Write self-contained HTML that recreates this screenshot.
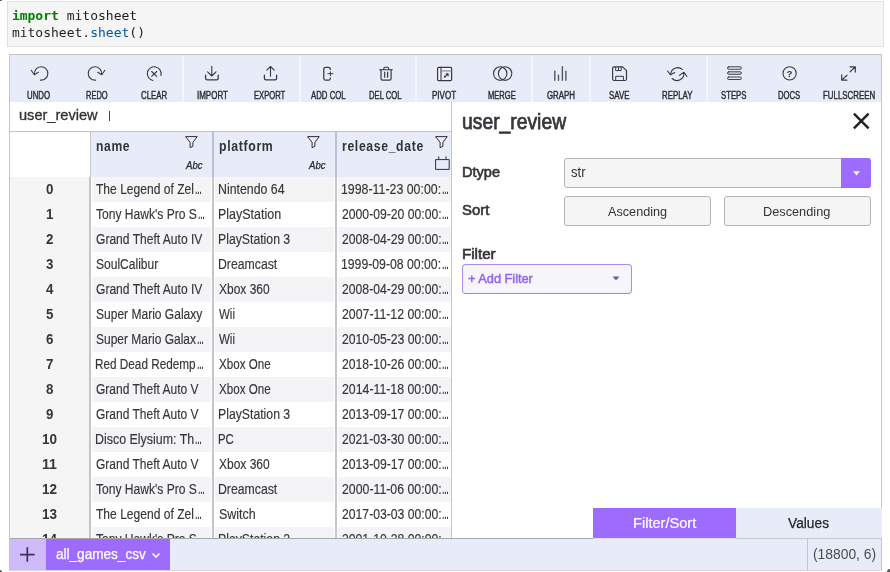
<!DOCTYPE html>
<html lang="en"><head><meta charset="utf-8"><title>mitosheet</title>
<style>
html,body{margin:0;padding:0;background:#fff;}
body{width:890px;height:572px;position:relative;overflow:hidden;}
div,span.t,svg{position:absolute;box-sizing:border-box;}
span.t{white-space:pre;transform-origin:0 50%;display:block;}
svg{overflow:visible;}
.wrap{left:0;top:0;width:890px;height:572px;overflow:hidden;will-change:transform;}
</style></head>
<body>
<div class="wrap">
<div style="left:7px;top:1px;width:877px;height:46px;background:#f5f5f5;border:1px solid #e0e0e0;"></div>
<span class="t" style="top:7px;font:700 13px/17px 'DejaVu Sans Mono', 'Liberation Mono', monospace;color:#008000;left:11.90px;">import</span><span class="t" style="top:7px;font:400 13px/17px 'DejaVu Sans Mono', 'Liberation Mono', monospace;color:#1f1f1f;left:58.88px;"> mitosheet</span>
<span class="t" style="top:24px;font:400 13px/17px 'DejaVu Sans Mono', 'Liberation Mono', monospace;color:#1f1f1f;left:11.90px;">mitosheet.</span><span class="t" style="top:24px;font:400 13px/17px 'DejaVu Sans Mono', 'Liberation Mono', monospace;color:#0055aa;left:90.20px;">sheet</span><span class="t" style="top:24px;font:400 13px/17px 'DejaVu Sans Mono', 'Liberation Mono', monospace;color:#1f1f1f;left:129.35px;">()</span>
<div style="left:9px;top:54px;width:873px;height:516px;background:#fff;border:1px solid #c6c6c6;"></div>
<div style="left:10px;top:55px;width:871px;height:47px;background:#e8ebf8;"></div>
<div style="left:182px;top:56px;width:2px;height:46px;background:#f5f6fc;"></div>
<div style="left:299px;top:56px;width:2px;height:46px;background:#f5f6fc;"></div>
<div style="left:415px;top:56px;width:2px;height:46px;background:#f5f6fc;"></div>
<div style="left:531px;top:56px;width:2px;height:46px;background:#f5f6fc;"></div>
<div style="left:589px;top:56px;width:2px;height:46px;background:#f5f6fc;"></div>
<div style="left:706px;top:56px;width:2px;height:46px;background:#f5f6fc;"></div>
<span class="t" style="top:89px;font:400 10px/14px 'Liberation Sans', sans-serif;color:#2b2b31;-webkit-text-stroke:0.4px #2b2b31;left:26.90px;transform:scale(0.7821,1);transform-origin:0 10px;">UNDO</span>
<span class="t" style="top:89px;font:400 10px/14px 'Liberation Sans', sans-serif;color:#2b2b31;-webkit-text-stroke:0.4px #2b2b31;left:85.50px;transform:scale(0.7488,1);transform-origin:0 10px;">REDO</span>
<span class="t" style="top:89px;font:400 10px/14px 'Liberation Sans', sans-serif;color:#2b2b31;-webkit-text-stroke:0.4px #2b2b31;left:141.00px;transform:scale(0.7850,1);transform-origin:0 10px;">CLEAR</span>
<span class="t" style="top:89px;font:400 10px/14px 'Liberation Sans', sans-serif;color:#2b2b31;-webkit-text-stroke:0.4px #2b2b31;left:196.60px;transform:scale(0.7980,1);transform-origin:0 10px;">IMPORT</span>
<span class="t" style="top:89px;font:400 10px/14px 'Liberation Sans', sans-serif;color:#2b2b31;-webkit-text-stroke:0.4px #2b2b31;left:254.20px;transform:scale(0.7642,1);transform-origin:0 10px;">EXPORT</span>
<span class="t" style="top:89px;font:400 10px/14px 'Liberation Sans', sans-serif;color:#2b2b31;-webkit-text-stroke:0.4px #2b2b31;left:311.00px;transform:scale(0.7797,1);transform-origin:0 10px;">ADD COL</span>
<span class="t" style="top:89px;font:400 10px/14px 'Liberation Sans', sans-serif;color:#2b2b31;-webkit-text-stroke:0.4px #2b2b31;left:369.30px;transform:scale(0.7680,1);transform-origin:0 10px;">DEL COL</span>
<span class="t" style="top:89px;font:400 10px/14px 'Liberation Sans', sans-serif;color:#2b2b31;-webkit-text-stroke:0.4px #2b2b31;left:432.40px;transform:scale(0.8028,1);transform-origin:0 10px;">PIVOT</span>
<span class="t" style="top:89px;font:400 10px/14px 'Liberation Sans', sans-serif;color:#2b2b31;-webkit-text-stroke:0.4px #2b2b31;left:488.00px;transform:scale(0.7568,1);transform-origin:0 10px;">MERGE</span>
<span class="t" style="top:89px;font:400 10px/14px 'Liberation Sans', sans-serif;color:#2b2b31;-webkit-text-stroke:0.4px #2b2b31;left:546.70px;transform:scale(0.7866,1);transform-origin:0 10px;">GRAPH</span>
<span class="t" style="top:89px;font:400 10px/14px 'Liberation Sans', sans-serif;color:#2b2b31;-webkit-text-stroke:0.4px #2b2b31;left:608.85px;transform:scale(0.7880,1);transform-origin:0 10px;">SAVE</span>
<span class="t" style="top:89px;font:400 10px/14px 'Liberation Sans', sans-serif;color:#2b2b31;-webkit-text-stroke:0.4px #2b2b31;left:661.65px;transform:scale(0.7862,1);transform-origin:0 10px;">REPLAY</span>
<span class="t" style="top:89px;font:400 10px/14px 'Liberation Sans', sans-serif;color:#2b2b31;-webkit-text-stroke:0.4px #2b2b31;left:721.35px;transform:scale(0.7760,1);transform-origin:0 10px;">STEPS</span>
<span class="t" style="top:89px;font:400 10px/14px 'Liberation Sans', sans-serif;color:#2b2b31;-webkit-text-stroke:0.4px #2b2b31;left:778.00px;transform:scale(0.7666,1);transform-origin:0 10px;">DOCS</span>
<span class="t" style="top:89px;font:400 10px/14px 'Liberation Sans', sans-serif;color:#2b2b31;-webkit-text-stroke:0.4px #2b2b31;left:822.75px;transform:scale(0.7875,1);transform-origin:0 10px;">FULLSCREEN</span>
<svg style="left:0;top:0" width="890" height="110" viewBox="0 0 890 110" fill="none" stroke="#3a3a42" stroke-linecap="round" stroke-linejoin="round"><path d="M34.5 74.3A6.7 6.7 0 1 1 40.4 80.1" stroke-width="1.1" /><path d="M31.2 70.3L34.3 74.8L38.4 72.3" stroke-width="1.1" /><path d="M101.6 74.3A6.7 6.7 0 1 0 95.7 80.1" stroke-width="1.1" /><path d="M104.9 70.3L101.8 74.8L97.7 72.3" stroke-width="1.1" /><path d="M160.9 75.4A6.9 6.9 0 1 0 153.0 80.45" stroke-width="1.1" /><path d="M151.7 71.5L156.7 76.3M156.7 71.5L151.7 76.3" stroke-width="1.1" /><path d="M211.8 66.3V75.8M207.6 71.8L211.8 76L216 71.8" stroke-width="1.1" /><path d="M205.6 75.2V78.2Q205.6 79.8 207.2 79.8H216.6Q218.2 79.8 218.2 78.2V75.2" stroke-width="1.3" /><path d="M270.5 76.2V66.6M266.8 70.2L270.5 66.5L274.2 70.2" stroke-width="1.1" /><path d="M264.4 75.2V78.2Q264.4 79.8 266 79.8H275Q276.6 79.8 276.6 78.2V75.2" stroke-width="1.3" /><path d="M330.3 70.0V69.1Q330.3 67.3 328.5 67.3H325.6Q323.8 67.3 323.8 69.1V78.4Q323.8 80.2 325.6 80.2H328.5Q330.3 80.2 330.3 78.4V77.5" stroke-width="1.25" stroke-linecap="butt"/><path d="M327.5 73.7H333.3M330.4 71.4V76.1" stroke-width="1.0" stroke-linecap="butt"/><path d="M379.6 69.7H392.4M383.8 69.5V68.3Q383.8 67.3 384.8 67.3H387.6Q388.6 67.3 388.6 68.3V69.5" stroke-width="1.1" /><path d="M381 69.9V78.6Q381 80.2 382.6 80.2H389.5Q391.1 80.2 391.1 78.6V69.9" stroke-width="1.2" /><path d="M384.7 72.2V77.2M387.6 72.2V77.2" stroke-width="1.2" /><rect x="437.6" y="67.4" width="14" height="13.1" rx="1" fill="#f7f7fd" stroke-width="1.25"/><rect x="441.4" y="71.3" width="9.6" height="8.6" fill="#e8ebf8" stroke="none"/><path d="M441 67.4V80.5" stroke-width="1.1" /><path d="M441 70.9H451.6" stroke-width="1.0" stroke="#77777f"/><path d="M444.6 76.9L447.8 74.3M446.3 73.9H448.1V75.8" stroke-width="1.1" /><circle cx="444.8" cy="76.7" r="0.9" fill="#2f2f36" stroke="none"/><ellipse cx="500.2" cy="73.55" rx="6.7" ry="6.8" stroke-width="1.1"/><ellipse cx="505.1" cy="73.55" rx="6.7" ry="6.8" stroke-width="1.1"/><path d="M554.8 71.1V80.3M558.5 75.2V80.3M562.4 66.6V80.3M565.9 71.1V80.3" stroke-width="1.4" stroke="#565660"/><path d="M614.1 66.9H622.6L626.5 70.6V79Q626.5 80.5 625 80.5H614.1Q612.6 80.5 612.6 79V68.4Q612.6 66.9 614.1 66.9Z" stroke-width="1.2" /><path d="M615.7 67V70.6H621.2V67M618.5 67.4V69.6" stroke-width="1.0" /><path d="M615.7 80.4V76.3H623.4V80.4" stroke-width="1.0" /><path d="M670.7 74.4A7.1 7.1 0 0 1 682.3 69.3" stroke-width="1.1" /><path d="M667.6 71.0L670.5 74.8L674.7 72.4" stroke-width="1.1" /><path d="M683.9 72.8A6.9 6.9 0 0 1 672.2 78.5" stroke-width="1.1" /><path d="M679.4 75.4L683.9 72.3L686.9 76.5" stroke-width="1.1" /><rect x="727.5" y="66.8" width="13.9" height="2.5" rx="1.25" fill="#e6e8f7" stroke-width="0.95"/><rect x="727.5" y="71.8" width="13.9" height="2.5" rx="1.25" fill="#d9d9df" stroke-width="0.95"/><rect x="727.5" y="77.0" width="13.9" height="2.5" rx="1.25" fill="#e6e8f7" stroke-width="0.95"/><circle cx="789.6" cy="73.4" r="6.6" stroke-width="1.1"/><text x="789.6" y="76.7" text-anchor="middle" font-family="'Liberation Sans',sans-serif" font-weight="700" font-size="9.2" fill="#2f2f36" stroke="none">?</text><path d="M850 71.9L855.3 66.8M850 66.8H855.3V72.1" stroke-width="1.2" /><path d="M847 75.2L841.7 80.1M841.7 74.9V80.1H847" stroke-width="1.2" /></svg>
<span class="t" style="top:105px;font:400 15px/19px 'Liberation Sans', sans-serif;color:#2f2f33;-webkit-text-stroke:0.3px #2f2f33;left:19.20px;transform:scale(0.9712,1);transform-origin:0 15px;">user_review</span>
<div style="left:109px;top:111px;width:1px;height:10px;background:#4a4a4e;"></div>
<div style="left:10px;top:131px;width:441px;height:1px;background:#c4c4c4;"></div>
<div style="left:91px;top:132px;width:360px;height:45px;background:#e8ebf8;"></div>
<div style="left:10px;top:177px;width:79px;height:361px;background:#f5f5f5;"></div>
<div style="left:90px;top:132px;width:1px;height:45px;background:#c6c6cc;"></div>
<div style="left:89px;top:177px;width:2px;height:361px;background:#c4c4c4;"></div>
<div style="left:212px;top:132px;width:2px;height:45px;background:#bcc0d2;"></div>
<div style="left:212px;top:177px;width:2px;height:361px;background:#c6c6c8;"></div>
<div style="left:335px;top:132px;width:2px;height:45px;background:#bcc0d2;"></div>
<div style="left:335px;top:177px;width:2px;height:361px;background:#c6c6c8;"></div>
<div style="left:92px;top:177px;width:119px;height:25px;background:#f4f4f6;"></div>
<div style="left:215px;top:177px;width:119px;height:25px;background:#f4f4f6;"></div>
<div style="left:338px;top:177px;width:113px;height:25px;background:#f4f4f6;"></div>
<span class="t" style="top:180px;font:700 14px/18px 'Liberation Sans', sans-serif;color:#35353a;left:45.60px;transform:scale(0.9500,1);transform-origin:0 14px;">0</span>
<span class="t" style="top:180px;font:400 14px/18px 'Liberation Sans', sans-serif;color:#35353a;-webkit-text-stroke:0.15px #35353a;left:96.00px;transform:scale(0.8615,1);transform-origin:0 14px;">The Legend of Zel</span><span class="t" style="top:180px;font:700 14px/18px 'Liberation Sans', sans-serif;color:#35353a;left:195.02px;transform:scale(0.4833,1);transform-origin:0 14px;">…</span>
<span class="t" style="top:180px;font:400 14px/18px 'Liberation Sans', sans-serif;color:#35353a;-webkit-text-stroke:0.15px #35353a;left:218.12px;transform:scale(0.8807,1);transform-origin:0 14px;">Nintendo 64</span>
<span class="t" style="top:180px;font:400 14px/18px 'Liberation Sans', sans-serif;color:#35353a;-webkit-text-stroke:0.15px #35353a;left:341.42px;transform:scale(0.8825,1);transform-origin:0 14px;">1998-11-23 00:00:</span><span class="t" style="top:180px;font:700 14px/18px 'Liberation Sans', sans-serif;color:#35353a;left:441.92px;transform:scale(0.4833,1);transform-origin:0 14px;">…</span>
<span class="t" style="top:205px;font:700 14px/18px 'Liberation Sans', sans-serif;color:#35353a;left:45.60px;transform:scale(0.9500,1);transform-origin:0 14px;">1</span>
<span class="t" style="top:205px;font:400 14px/18px 'Liberation Sans', sans-serif;color:#35353a;-webkit-text-stroke:0.15px #35353a;left:96.00px;transform:scale(0.8620,1);transform-origin:0 14px;">Tony Hawk's Pro S</span><span class="t" style="top:205px;font:700 14px/18px 'Liberation Sans', sans-serif;color:#35353a;left:197.82px;transform:scale(0.4833,1);transform-origin:0 14px;">…</span>
<span class="t" style="top:205px;font:400 14px/18px 'Liberation Sans', sans-serif;color:#35353a;-webkit-text-stroke:0.15px #35353a;left:218.11px;transform:scale(0.8909,1);transform-origin:0 14px;">PlayStation</span>
<span class="t" style="top:205px;font:400 14px/18px 'Liberation Sans', sans-serif;color:#35353a;-webkit-text-stroke:0.15px #35353a;left:341.80px;transform:scale(0.8711,1);transform-origin:0 14px;">2000-09-20 00:00:</span><span class="t" style="top:205px;font:700 14px/18px 'Liberation Sans', sans-serif;color:#35353a;left:441.92px;transform:scale(0.4833,1);transform-origin:0 14px;">…</span>
<div style="left:92px;top:227px;width:119px;height:25px;background:#f4f4f6;"></div>
<div style="left:215px;top:227px;width:119px;height:25px;background:#f4f4f6;"></div>
<div style="left:338px;top:227px;width:113px;height:25px;background:#f4f4f6;"></div>
<span class="t" style="top:230px;font:700 14px/18px 'Liberation Sans', sans-serif;color:#35353a;left:45.60px;transform:scale(0.9500,1);transform-origin:0 14px;">2</span>
<span class="t" style="top:230px;font:400 14px/18px 'Liberation Sans', sans-serif;color:#35353a;-webkit-text-stroke:0.15px #35353a;left:96.00px;transform:scale(0.8612,1);transform-origin:0 14px;">Grand Theft Auto IV</span>
<span class="t" style="top:230px;font:400 14px/18px 'Liberation Sans', sans-serif;color:#35353a;-webkit-text-stroke:0.15px #35353a;left:218.12px;transform:scale(0.8750,1);transform-origin:0 14px;">PlayStation 3</span>
<span class="t" style="top:230px;font:400 14px/18px 'Liberation Sans', sans-serif;color:#35353a;-webkit-text-stroke:0.15px #35353a;left:341.80px;transform:scale(0.8711,1);transform-origin:0 14px;">2008-04-29 00:00:</span><span class="t" style="top:230px;font:700 14px/18px 'Liberation Sans', sans-serif;color:#35353a;left:441.92px;transform:scale(0.4833,1);transform-origin:0 14px;">…</span>
<span class="t" style="top:255px;font:700 14px/18px 'Liberation Sans', sans-serif;color:#35353a;left:45.60px;transform:scale(0.9500,1);transform-origin:0 14px;">3</span>
<span class="t" style="top:255px;font:400 14px/18px 'Liberation Sans', sans-serif;color:#35353a;-webkit-text-stroke:0.15px #35353a;left:96.00px;transform:scale(0.8596,1);transform-origin:0 14px;">SoulCalibur</span>
<span class="t" style="top:255px;font:400 14px/18px 'Liberation Sans', sans-serif;color:#35353a;-webkit-text-stroke:0.15px #35353a;left:218.12px;transform:scale(0.8758,1);transform-origin:0 14px;">Dreamcast</span>
<span class="t" style="top:255px;font:400 14px/18px 'Liberation Sans', sans-serif;color:#35353a;-webkit-text-stroke:0.15px #35353a;left:341.43px;transform:scale(0.8744,1);transform-origin:0 14px;">1999-09-08 00:00:</span><span class="t" style="top:255px;font:700 14px/18px 'Liberation Sans', sans-serif;color:#35353a;left:441.92px;transform:scale(0.4833,1);transform-origin:0 14px;">…</span>
<div style="left:92px;top:277px;width:119px;height:25px;background:#f4f4f6;"></div>
<div style="left:215px;top:277px;width:119px;height:25px;background:#f4f4f6;"></div>
<div style="left:338px;top:277px;width:113px;height:25px;background:#f4f4f6;"></div>
<span class="t" style="top:280px;font:700 14px/18px 'Liberation Sans', sans-serif;color:#35353a;left:45.60px;transform:scale(0.9500,1);transform-origin:0 14px;">4</span>
<span class="t" style="top:280px;font:400 14px/18px 'Liberation Sans', sans-serif;color:#35353a;-webkit-text-stroke:0.15px #35353a;left:96.00px;transform:scale(0.8612,1);transform-origin:0 14px;">Grand Theft Auto IV</span>
<span class="t" style="top:280px;font:400 14px/18px 'Liberation Sans', sans-serif;color:#35353a;-webkit-text-stroke:0.15px #35353a;left:219.00px;transform:scale(0.8556,1);transform-origin:0 14px;">Xbox 360</span>
<span class="t" style="top:280px;font:400 14px/18px 'Liberation Sans', sans-serif;color:#35353a;-webkit-text-stroke:0.15px #35353a;left:341.80px;transform:scale(0.8711,1);transform-origin:0 14px;">2008-04-29 00:00:</span><span class="t" style="top:280px;font:700 14px/18px 'Liberation Sans', sans-serif;color:#35353a;left:441.92px;transform:scale(0.4833,1);transform-origin:0 14px;">…</span>
<span class="t" style="top:305px;font:700 14px/18px 'Liberation Sans', sans-serif;color:#35353a;left:45.60px;transform:scale(0.9500,1);transform-origin:0 14px;">5</span>
<span class="t" style="top:305px;font:400 14px/18px 'Liberation Sans', sans-serif;color:#35353a;-webkit-text-stroke:0.15px #35353a;left:96.00px;transform:scale(0.8592,1);transform-origin:0 14px;">Super Mario Galaxy</span>
<span class="t" style="top:305px;font:400 14px/18px 'Liberation Sans', sans-serif;color:#35353a;-webkit-text-stroke:0.15px #35353a;left:219.00px;transform:scale(0.8228,1);transform-origin:0 14px;">Wii</span>
<span class="t" style="top:305px;font:400 14px/18px 'Liberation Sans', sans-serif;color:#35353a;-webkit-text-stroke:0.15px #35353a;left:341.80px;transform:scale(0.8791,1);transform-origin:0 14px;">2007-11-12 00:00:</span><span class="t" style="top:305px;font:700 14px/18px 'Liberation Sans', sans-serif;color:#35353a;left:441.92px;transform:scale(0.4833,1);transform-origin:0 14px;">…</span>
<div style="left:92px;top:327px;width:119px;height:25px;background:#f4f4f6;"></div>
<div style="left:215px;top:327px;width:119px;height:25px;background:#f4f4f6;"></div>
<div style="left:338px;top:327px;width:113px;height:25px;background:#f4f4f6;"></div>
<span class="t" style="top:330px;font:700 14px/18px 'Liberation Sans', sans-serif;color:#35353a;left:45.60px;transform:scale(0.9500,1);transform-origin:0 14px;">6</span>
<span class="t" style="top:330px;font:400 14px/18px 'Liberation Sans', sans-serif;color:#35353a;-webkit-text-stroke:0.15px #35353a;left:96.00px;transform:scale(0.8568,1);transform-origin:0 14px;">Super Mario Galax</span><span class="t" style="top:330px;font:700 14px/18px 'Liberation Sans', sans-serif;color:#35353a;left:197.22px;transform:scale(0.4833,1);transform-origin:0 14px;">…</span>
<span class="t" style="top:330px;font:400 14px/18px 'Liberation Sans', sans-serif;color:#35353a;-webkit-text-stroke:0.15px #35353a;left:219.00px;transform:scale(0.8228,1);transform-origin:0 14px;">Wii</span>
<span class="t" style="top:330px;font:400 14px/18px 'Liberation Sans', sans-serif;color:#35353a;-webkit-text-stroke:0.15px #35353a;left:341.80px;transform:scale(0.8711,1);transform-origin:0 14px;">2010-05-23 00:00:</span><span class="t" style="top:330px;font:700 14px/18px 'Liberation Sans', sans-serif;color:#35353a;left:441.92px;transform:scale(0.4833,1);transform-origin:0 14px;">…</span>
<span class="t" style="top:355px;font:700 14px/18px 'Liberation Sans', sans-serif;color:#35353a;left:45.60px;transform:scale(0.9500,1);transform-origin:0 14px;">7</span>
<span class="t" style="top:355px;font:400 14px/18px 'Liberation Sans', sans-serif;color:#35353a;-webkit-text-stroke:0.15px #35353a;left:95.16px;transform:scale(0.8399,1);transform-origin:0 14px;">Red Dead Redemp</span><span class="t" style="top:355px;font:700 14px/18px 'Liberation Sans', sans-serif;color:#35353a;left:197.22px;transform:scale(0.4833,1);transform-origin:0 14px;">…</span>
<span class="t" style="top:355px;font:400 14px/18px 'Liberation Sans', sans-serif;color:#35353a;-webkit-text-stroke:0.15px #35353a;left:219.00px;transform:scale(0.8291,1);transform-origin:0 14px;">Xbox One</span>
<span class="t" style="top:355px;font:400 14px/18px 'Liberation Sans', sans-serif;color:#35353a;-webkit-text-stroke:0.15px #35353a;left:341.80px;transform:scale(0.8711,1);transform-origin:0 14px;">2018-10-26 00:00:</span><span class="t" style="top:355px;font:700 14px/18px 'Liberation Sans', sans-serif;color:#35353a;left:441.92px;transform:scale(0.4833,1);transform-origin:0 14px;">…</span>
<div style="left:92px;top:377px;width:119px;height:25px;background:#f4f4f6;"></div>
<div style="left:215px;top:377px;width:119px;height:25px;background:#f4f4f6;"></div>
<div style="left:338px;top:377px;width:113px;height:25px;background:#f4f4f6;"></div>
<span class="t" style="top:380px;font:700 14px/18px 'Liberation Sans', sans-serif;color:#35353a;left:45.60px;transform:scale(0.9500,1);transform-origin:0 14px;">8</span>
<span class="t" style="top:380px;font:400 14px/18px 'Liberation Sans', sans-serif;color:#35353a;-webkit-text-stroke:0.15px #35353a;left:96.00px;transform:scale(0.8575,1);transform-origin:0 14px;">Grand Theft Auto V</span>
<span class="t" style="top:380px;font:400 14px/18px 'Liberation Sans', sans-serif;color:#35353a;-webkit-text-stroke:0.15px #35353a;left:219.00px;transform:scale(0.8291,1);transform-origin:0 14px;">Xbox One</span>
<span class="t" style="top:380px;font:400 14px/18px 'Liberation Sans', sans-serif;color:#35353a;-webkit-text-stroke:0.15px #35353a;left:341.80px;transform:scale(0.8791,1);transform-origin:0 14px;">2014-11-18 00:00:</span><span class="t" style="top:380px;font:700 14px/18px 'Liberation Sans', sans-serif;color:#35353a;left:441.92px;transform:scale(0.4833,1);transform-origin:0 14px;">…</span>
<span class="t" style="top:405px;font:700 14px/18px 'Liberation Sans', sans-serif;color:#35353a;left:45.60px;transform:scale(0.9500,1);transform-origin:0 14px;">9</span>
<span class="t" style="top:405px;font:400 14px/18px 'Liberation Sans', sans-serif;color:#35353a;-webkit-text-stroke:0.15px #35353a;left:96.00px;transform:scale(0.8575,1);transform-origin:0 14px;">Grand Theft Auto V</span>
<span class="t" style="top:405px;font:400 14px/18px 'Liberation Sans', sans-serif;color:#35353a;-webkit-text-stroke:0.15px #35353a;left:218.12px;transform:scale(0.8750,1);transform-origin:0 14px;">PlayStation 3</span>
<span class="t" style="top:405px;font:400 14px/18px 'Liberation Sans', sans-serif;color:#35353a;-webkit-text-stroke:0.15px #35353a;left:341.80px;transform:scale(0.8711,1);transform-origin:0 14px;">2013-09-17 00:00:</span><span class="t" style="top:405px;font:700 14px/18px 'Liberation Sans', sans-serif;color:#35353a;left:441.92px;transform:scale(0.4833,1);transform-origin:0 14px;">…</span>
<div style="left:92px;top:427px;width:119px;height:25px;background:#f4f4f6;"></div>
<div style="left:215px;top:427px;width:119px;height:25px;background:#f4f4f6;"></div>
<div style="left:338px;top:427px;width:113px;height:25px;background:#f4f4f6;"></div>
<span class="t" style="top:430px;font:700 14px/18px 'Liberation Sans', sans-serif;color:#35353a;left:41.80px;transform:scale(0.9629,1);transform-origin:0 14px;">10</span>
<span class="t" style="top:430px;font:400 14px/18px 'Liberation Sans', sans-serif;color:#35353a;-webkit-text-stroke:0.15px #35353a;left:95.11px;transform:scale(0.8881,1);transform-origin:0 14px;">Disco Elysium: Th</span><span class="t" style="top:430px;font:700 14px/18px 'Liberation Sans', sans-serif;color:#35353a;left:195.12px;transform:scale(0.4833,1);transform-origin:0 14px;">…</span>
<span class="t" style="top:430px;font:400 14px/18px 'Liberation Sans', sans-serif;color:#35353a;-webkit-text-stroke:0.15px #35353a;left:218.19px;transform:scale(0.8125,1);transform-origin:0 14px;">PC</span>
<span class="t" style="top:430px;font:400 14px/18px 'Liberation Sans', sans-serif;color:#35353a;-webkit-text-stroke:0.15px #35353a;left:341.80px;transform:scale(0.8711,1);transform-origin:0 14px;">2021-03-30 00:00:</span><span class="t" style="top:430px;font:700 14px/18px 'Liberation Sans', sans-serif;color:#35353a;left:441.92px;transform:scale(0.4833,1);transform-origin:0 14px;">…</span>
<span class="t" style="top:455px;font:700 14px/18px 'Liberation Sans', sans-serif;color:#35353a;left:41.80px;transform:scale(1.0124,1);transform-origin:0 14px;">11</span>
<span class="t" style="top:455px;font:400 14px/18px 'Liberation Sans', sans-serif;color:#35353a;-webkit-text-stroke:0.15px #35353a;left:96.00px;transform:scale(0.8575,1);transform-origin:0 14px;">Grand Theft Auto V</span>
<span class="t" style="top:455px;font:400 14px/18px 'Liberation Sans', sans-serif;color:#35353a;-webkit-text-stroke:0.15px #35353a;left:219.00px;transform:scale(0.8556,1);transform-origin:0 14px;">Xbox 360</span>
<span class="t" style="top:455px;font:400 14px/18px 'Liberation Sans', sans-serif;color:#35353a;-webkit-text-stroke:0.15px #35353a;left:341.80px;transform:scale(0.8711,1);transform-origin:0 14px;">2013-09-17 00:00:</span><span class="t" style="top:455px;font:700 14px/18px 'Liberation Sans', sans-serif;color:#35353a;left:441.92px;transform:scale(0.4833,1);transform-origin:0 14px;">…</span>
<div style="left:92px;top:477px;width:119px;height:25px;background:#f4f4f6;"></div>
<div style="left:215px;top:477px;width:119px;height:25px;background:#f4f4f6;"></div>
<div style="left:338px;top:477px;width:113px;height:25px;background:#f4f4f6;"></div>
<span class="t" style="top:480px;font:700 14px/18px 'Liberation Sans', sans-serif;color:#35353a;left:41.80px;transform:scale(0.9629,1);transform-origin:0 14px;">12</span>
<span class="t" style="top:480px;font:400 14px/18px 'Liberation Sans', sans-serif;color:#35353a;-webkit-text-stroke:0.15px #35353a;left:96.00px;transform:scale(0.8620,1);transform-origin:0 14px;">Tony Hawk's Pro S</span><span class="t" style="top:480px;font:700 14px/18px 'Liberation Sans', sans-serif;color:#35353a;left:197.82px;transform:scale(0.4833,1);transform-origin:0 14px;">…</span>
<span class="t" style="top:480px;font:400 14px/18px 'Liberation Sans', sans-serif;color:#35353a;-webkit-text-stroke:0.15px #35353a;left:218.12px;transform:scale(0.8758,1);transform-origin:0 14px;">Dreamcast</span>
<span class="t" style="top:480px;font:400 14px/18px 'Liberation Sans', sans-serif;color:#35353a;-webkit-text-stroke:0.15px #35353a;left:341.80px;transform:scale(0.8791,1);transform-origin:0 14px;">2000-11-06 00:00:</span><span class="t" style="top:480px;font:700 14px/18px 'Liberation Sans', sans-serif;color:#35353a;left:441.92px;transform:scale(0.4833,1);transform-origin:0 14px;">…</span>
<span class="t" style="top:505px;font:700 14px/18px 'Liberation Sans', sans-serif;color:#35353a;left:41.80px;transform:scale(0.9629,1);transform-origin:0 14px;">13</span>
<span class="t" style="top:505px;font:400 14px/18px 'Liberation Sans', sans-serif;color:#35353a;-webkit-text-stroke:0.15px #35353a;left:96.00px;transform:scale(0.8615,1);transform-origin:0 14px;">The Legend of Zel</span><span class="t" style="top:505px;font:700 14px/18px 'Liberation Sans', sans-serif;color:#35353a;left:195.02px;transform:scale(0.4833,1);transform-origin:0 14px;">…</span>
<span class="t" style="top:505px;font:400 14px/18px 'Liberation Sans', sans-serif;color:#35353a;-webkit-text-stroke:0.15px #35353a;left:219.00px;transform:scale(0.8876,1);transform-origin:0 14px;">Switch</span>
<span class="t" style="top:505px;font:400 14px/18px 'Liberation Sans', sans-serif;color:#35353a;-webkit-text-stroke:0.15px #35353a;left:341.80px;transform:scale(0.8711,1);transform-origin:0 14px;">2017-03-03 00:00:</span><span class="t" style="top:505px;font:700 14px/18px 'Liberation Sans', sans-serif;color:#35353a;left:441.92px;transform:scale(0.4833,1);transform-origin:0 14px;">…</span>
<div style="left:92px;top:527px;width:119px;height:11px;background:#f4f4f6;"></div>
<div style="left:215px;top:527px;width:119px;height:11px;background:#f4f4f6;"></div>
<div style="left:338px;top:527px;width:113px;height:11px;background:#f4f4f6;"></div>
<span class="t" style="top:530px;font:700 14px/18px 'Liberation Sans', sans-serif;color:#35353a;left:41.80px;transform:scale(0.9629,1);transform-origin:0 14px;">14</span>
<span class="t" style="top:530px;font:400 14px/18px 'Liberation Sans', sans-serif;color:#35353a;-webkit-text-stroke:0.15px #35353a;left:96.00px;transform:scale(0.8620,1);transform-origin:0 14px;">Tony Hawk's Pro S</span><span class="t" style="top:530px;font:700 14px/18px 'Liberation Sans', sans-serif;color:#35353a;left:197.82px;transform:scale(0.4833,1);transform-origin:0 14px;">…</span>
<span class="t" style="top:530px;font:400 14px/18px 'Liberation Sans', sans-serif;color:#35353a;-webkit-text-stroke:0.15px #35353a;left:218.12px;transform:scale(0.8750,1);transform-origin:0 14px;">PlayStation 2</span>
<span class="t" style="top:530px;font:400 14px/18px 'Liberation Sans', sans-serif;color:#35353a;-webkit-text-stroke:0.15px #35353a;left:341.80px;transform:scale(0.8711,1);transform-origin:0 14px;">2001-10-28 00:00:</span><span class="t" style="top:530px;font:700 14px/18px 'Liberation Sans', sans-serif;color:#35353a;left:441.92px;transform:scale(0.4833,1);transform-origin:0 14px;">…</span>
<span class="t" style="top:136px;font:700 15px/19px 'Liberation Sans', sans-serif;color:#33333a;letter-spacing:0.8px;left:96.00px;transform:scale(0.8074,1);transform-origin:0 15px;">name</span>
<span class="t" style="top:136px;font:700 15px/19px 'Liberation Sans', sans-serif;color:#33333a;letter-spacing:0.8px;left:219.00px;transform:scale(0.8198,1);transform-origin:0 15px;">platform</span>
<span class="t" style="top:136px;font:700 15px/19px 'Liberation Sans', sans-serif;color:#33333a;letter-spacing:0.8px;left:341.80px;transform:scale(0.8142,1);transform-origin:0 15px;">release_date</span>
<span class="t" style="top:159px;font:italic 400 10px/14px 'Liberation Sans', sans-serif;color:#2a2a2e;-webkit-text-stroke:0.25px #2a2a2e;left:185.56px;transform:scale(0.9599,1);transform-origin:0 10px;">Abc</span>
<span class="t" style="top:159px;font:italic 400 10px/14px 'Liberation Sans', sans-serif;color:#2a2a2e;-webkit-text-stroke:0.25px #2a2a2e;left:308.56px;transform:scale(0.9599,1);transform-origin:0 10px;">Abc</span>
<svg style="left:184.6px;top:135.5px" width="13" height="13" viewBox="0 0 13 13"><path d="M0.6 0.6H12.2L7.9 6.4V10.3L5.1 11.7V6.4Z" fill="none" stroke="#2f2f33" stroke-width="1" stroke-linejoin="round"/></svg>
<svg style="left:307.4px;top:135.5px" width="13" height="13" viewBox="0 0 13 13"><path d="M0.6 0.6H12.2L7.9 6.4V10.3L5.1 11.7V6.4Z" fill="none" stroke="#2f2f33" stroke-width="1" stroke-linejoin="round"/></svg>
<svg style="left:435px;top:135.5px" width="13" height="13" viewBox="0 0 13 13"><path d="M0.6 0.6H12.2L7.9 6.4V10.3L5.1 11.7V6.4Z" fill="none" stroke="#2f2f33" stroke-width="1" stroke-linejoin="round"/></svg>
<svg style="left:434.5px;top:156px" width="15" height="14" viewBox="0 0 15 14"><path d="M0.6 3.6H14.2V13.4H0.6ZM3.8 0.4V3.6M11 0.4V3.6" fill="none" stroke="#2f2f33" stroke-width="1"/></svg>
<div style="left:10px;top:538px;width:871px;height:32px;background:#e8ebf8;"></div>
<div style="left:10px;top:538px;width:583px;height:1px;background:#a6a6ae;"></div>
<div style="left:593px;top:538px;width:143px;height:1px;background:#e6dcfb;"></div>
<div style="left:736px;top:538px;width:145px;height:1px;background:#c6c6cc;"></div>
<div style="left:10px;top:539px;width:36px;height:31px;background:#cfbafc;"></div>
<div style="left:46px;top:539px;width:124px;height:31px;background:#9d6cff;"></div>
<svg style="left:19px;top:546px" width="17" height="17" viewBox="0 0 17 17"><path d="M8.3 1.3V15.7M1 8.6H15.6" stroke="#3d3358" stroke-width="1.7" fill="none"/></svg>
<span class="t" style="top:544px;font:400 15px/19px 'Liberation Sans', sans-serif;color:#fff;-webkit-text-stroke:0.25px #fff;left:56.40px;transform:scale(0.9046,1);transform-origin:0 15px;">all_games_csv</span>
<svg style="left:151px;top:552px" width="10" height="7" viewBox="0 0 10 7"><path d="M1.5 1.5L5 5L8.5 1.5" stroke="#fff" stroke-width="1.6" fill="none"/></svg>
<div style="left:807px;top:539px;width:1px;height:31px;background:#c4c4c8;"></div>
<div style="left:9px;top:570px;width:873px;height:1px;background:rgba(150,150,170,0.4);"></div>
<span class="t" style="top:545px;font:400 14px/18px 'Liberation Sans', sans-serif;color:#4a4a52;left:813.00px;transform:scale(0.9880,1);transform-origin:0 14px;">(18800, 6)</span>
<div style="left:451px;top:102px;width:430px;height:436px;background:#fff;border-left:1px solid #c6c6c6;"></div>
<span class="t" style="top:109px;font:400 22px/26px 'Liberation Sans', sans-serif;color:#37373c;-webkit-text-stroke:0.75px #37373c;left:462.12px;transform:scale(0.8775,1);transform-origin:0 20px;">user_review</span>
<svg style="left:853px;top:113px" width="17" height="17" viewBox="0 0 17 17"><path d="M0.9 0.7L15.6 15.3M15.6 0.7L0.9 15.3" stroke="#242428" stroke-width="2.5" fill="none"/></svg>
<span class="t" style="top:163px;font:400 14.5px/19px 'Liberation Sans', sans-serif;color:#333338;-webkit-text-stroke:0.6px #333338;left:461.99px;transform:scale(1.0050,1);transform-origin:0 14px;">Dtype</span>
<div style="left:564px;top:158px;width:307px;height:30px;background:#f5f5f5;border:1px solid #b4b4b4;border-radius:3px;"></div>
<div style="left:841px;top:158px;width:30px;height:30px;background:#9d6cff;border-radius:0 3px 3px 0;"></div>
<svg style="left:852.7px;top:170.8px" width="7" height="5" viewBox="0 0 7 5"><path d="M0.2 0.3H6.8L3.5 4.5Z" fill="#fff"/></svg>
<span class="t" style="top:163px;font:400 14px/18px 'Liberation Sans', sans-serif;color:#343434;left:570.60px;transform:scale(0.9314,1);transform-origin:0 14px;">str</span>
<span class="t" style="top:201px;font:400 14.5px/19px 'Liberation Sans', sans-serif;color:#333338;-webkit-text-stroke:0.6px #333338;left:462.40px;transform:scale(1.0277,1);transform-origin:0 14px;">Sort</span>
<div style="left:564px;top:196px;width:147px;height:30px;background:#f5f5f5;border:1px solid #b4b4b4;border-radius:3px;"></div>
<div style="left:724px;top:196px;width:147px;height:30px;background:#f5f5f5;border:1px solid #b4b4b4;border-radius:3px;"></div>
<span class="t" style="top:203px;font:400 13px/17px 'Liberation Sans', sans-serif;color:#343434;left:608.05px;transform:scale(0.9739,1);transform-origin:0 13px;">Ascending</span>
<span class="t" style="top:203px;font:400 13px/17px 'Liberation Sans', sans-serif;color:#343434;left:763.17px;transform:scale(0.9803,1);transform-origin:0 13px;">Descending</span>
<span class="t" style="top:245px;font:400 14.5px/19px 'Liberation Sans', sans-serif;color:#333338;-webkit-text-stroke:0.6px #333338;left:461.56px;transform:scale(1.0448,1);transform-origin:0 14px;">Filter</span>
<div style="left:462px;top:264px;width:170px;height:30px;background:#f6f5fa;border:1px solid #a88bf4;border-bottom-color:#9a8abf;border-radius:4px;"></div>
<span class="t" style="top:270px;font:400 13px/17px 'Liberation Sans', sans-serif;color:#9166f2;-webkit-text-stroke:0.5px #9166f2;left:468.20px;transform:scale(0.9807,1);transform-origin:0 13px;">+ Add Filter</span>
<svg style="left:612px;top:276px" width="8" height="5" viewBox="0 0 8 5"><path d="M0.5 0.5H7.5L4 4.5Z" fill="#6f5aa8"/></svg>
<div style="left:593px;top:508px;width:143px;height:30px;background:#9d6cff;"></div>
<div style="left:736px;top:508px;width:146px;height:30px;background:#e8ebf8;"></div>
<span class="t" style="top:514px;font:400 14.3px/19px 'Liberation Sans', sans-serif;color:#fff;-webkit-text-stroke:0.2px #fff;left:632.73px;transform:scale(1.0215,1);transform-origin:0 14px;">Filter/Sort</span>
<span class="t" style="top:514px;font:400 14px/18px 'Liberation Sans', sans-serif;color:#26262b;-webkit-text-stroke:0.25px #26262b;left:787.50px;transform:scale(0.9816,1);transform-origin:0 14px;">Values</span>
<div style="left:0px;top:0px;width:2px;height:1px;background:#555;border-radius:0 0 2px 0;"></div>
<div style="left:0px;top:570px;width:2px;height:2px;background:#555;border-radius:0 2px 0 0;"></div>
<div style="left:887px;top:569px;width:3px;height:3px;background:#555;border-radius:3px 0 0 0;"></div>
</div>
</body></html>
